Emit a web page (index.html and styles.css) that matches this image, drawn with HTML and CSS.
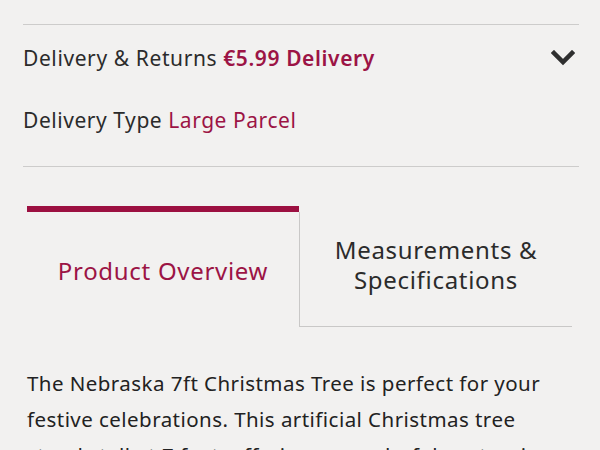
FILE: index.html
```html
<!DOCTYPE html>
<html lang="en">
<head>
<meta charset="utf-8">
<link rel="stylesheet" href="styles.css">
</head>
<body>
<div class="page">
  <section class="accordion">
    <div class="acc-row">
      <div class="acc-title">Delivery &amp; Returns <strong class="accent">€5.99 Delivery</strong></div>
      <svg class="chevron" width="24" height="16" viewBox="0 0 24 16" aria-hidden="true">
        <path d="M3 3 L12 12 L21 3" fill="none" stroke="#2f2f2f" stroke-width="4.5" stroke-linecap="square" stroke-linejoin="miter"/>
      </svg>
    </div>
    <div class="acc-body">Delivery Type <span class="accent-light">Large Parcel</span></div>
  </section>

  <div class="tabs">
    <div class="tab tab-active">Product Overview</div>
    <div class="tab tab-idle">Measurements &amp;<br>Specifications</div>
  </div>

  <p class="desc">The Nebraska 7ft Christmas Tree is perfect for your festive celebrations. This artificial Christmas tree stands tall at 7 feet, offering a wonderful centrepiece for any room in your home this season.</p>
</div>
</body>
</html>
```
FILE: styles.css
```css
html, body {
  margin: 0;
  padding: 0;
  background: #f2f1f0;
}
body {
  font-family: "Noto Sans", "Open Sans", sans-serif;
  color: #2b2b2b;
  width: 600px;
  height: 450px;
  overflow: hidden;
}
.page {
  padding: 24px 21px 0 23px;
}
.accordion {
  border-top: 1px solid #cdcccb;
  border-bottom: 1px solid #cdcccb;
  padding: 18px 0 31px;
}
.acc-row {
  display: flex;
  align-items: center;
  justify-content: space-between;
  height: 30px;
}
.acc-title {
  font-size: 21px;
  line-height: 30px;
  letter-spacing: 0.6px;
}
.accent {
  color: #9c1445;
  font-weight: 600;
}
.accent-light {
  color: #9c1445;
}
.chevron {
  margin-right: 4px;
}
.acc-body {
  margin-top: 32px;
  font-size: 21px;
  line-height: 30px;
  letter-spacing: 0.55px;
}
.tabs {
  display: flex;
  margin: 39px 7px 0 4px;
  height: 121px;
}
.tab {
  flex: 1;
  display: flex;
  align-items: center;
  justify-content: center;
  text-align: center;
  font-size: 24px;
  line-height: 30px;
  letter-spacing: 0.7px;
}
.tab-active {
  border-top: 6px solid #9c1041;
  color: #9c1445;
  padding-top: 2px;
}
.tab-idle {
  margin-top: 6px;
  border-left: 1px solid #c9c8c7;
  border-bottom: 1px solid #c9c8c7;
  padding-bottom: 8px;
}
.desc {
  margin: 38px 0 0 4px;
  font-size: 20.5px;
  line-height: 36px;
  letter-spacing: 0.45px;
  color: #222;
}
```
